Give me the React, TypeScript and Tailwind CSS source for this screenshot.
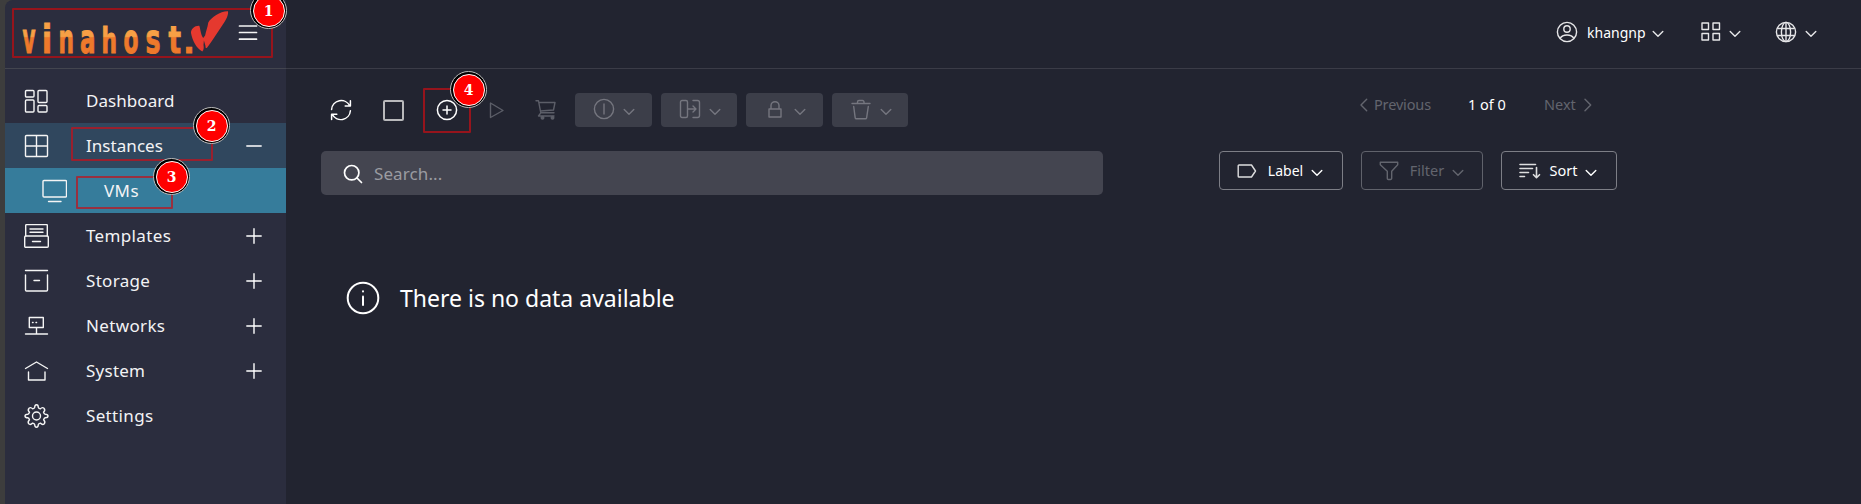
import React, { type ReactNode } from "react";

type IconProps = { w?: number; h?: number; sw?: number; className?: string; children: ReactNode };

function Icon({ w = 24, h = 24, sw = 1.4, className = "", children }: IconProps) {
  return (
    <svg
      width={w}
      height={h}
      viewBox={`0 0 ${w} ${h}`}
      fill="none"
      stroke="currentColor"
      strokeWidth={sw}
      strokeLinecap="round"
      strokeLinejoin="round"
      className={`block shrink-0 ${className}`}
    >
      {children}
    </svg>
  );
}

const Chevron = ({ className = "" }: { className?: string }) => (
  <Icon w={12} h={8} className={className}>
    <path d="M1.2 1.5 6 6.3l4.8-4.8" />
  </Icon>
);

const logoLetters = [
  { ch: "v", x: 22.5, sx: 0.475, size: 42 },
  { ch: "i", x: 42, sx: 0.747, size: 39 },
  { ch: "n", x: 58.5, sx: 0.531, size: 41 },
  { ch: "a", x: 80, sx: 0.56, size: 41 },
  { ch: "h", x: 101.5, sx: 0.605, size: 36 },
  { ch: "o", x: 123.5, sx: 0.532, size: 41 },
  { ch: "s", x: 145.5, sx: 0.615, size: 41 },
  { ch: "t", x: 168.5, sx: 0.688, size: 38 },
  { ch: ".", x: 183.5, sx: 0.965, size: 30 },
];

function Logo() {
  return (
    <svg width="233" height="68" viewBox="5 0 233 68" className="block shrink-0">
      <defs>
        <linearGradient id="logo" gradientUnits="userSpaceOnUse" x1="0" y1="-31" x2="0" y2="1">
          <stop offset="0.46" stopColor="#f7a045" />
          <stop offset="0.5" stopColor="#ee792b" />
        </linearGradient>
      </defs>
      {logoLetters.map((l) => (
        <text
          key={l.x}
          transform={`translate(${l.x} 52.7) scale(${l.sx} 1)`}
          fontSize={l.size}
          fontWeight="700"
          fill="url(#logo)"
          stroke="url(#logo)"
          strokeWidth="1"
          className="font-['DejaVu_Sans',sans-serif]"
        >
          {l.ch}
        </text>
      ))}
      <path
        fill="#e5392f"
        d="M228 11.2c.5 4-1.700 8-5 13-4.500 7-10.500 16-16 23.600-1.200.8-1.600-.3-1.500-1.800l-1.600-5.600-.4 4.600c.5 2.500.3 5.200-1.200 6.600-6-3.500-10-11-11.300-18.600-.3-4 4-7.600 8.300-7.200 1.200 3 1.200 8.500 3.900 12.200l1.900-2.600c.7-3.500 2.400-8 3.200-13C211 17.500 221 10.800 228 11.200z"
      />
    </svg>
  );
}

const Plus = (
  <Icon w={16} h={16} className="text-white">
    <path d="M8 .8v14.400M.8 8h14.400" />
  </Icon>
);
const Minus = (
  <Icon w={16} h={16} className="text-white">
    <path d="M.8 8h14.400" />
  </Icon>
);

const navItems: { label: string; cls: string; row: string; icon: ReactNode; end?: ReactNode }[] = [
  {
    label: "Dashboard",
    cls: "tracking-[0.05px]",
    row: "",
    icon: (
      <>
        <rect x="1.500" y="1.500" width="8.500" height="6.500" rx="1" />
        <rect x="1.500" y="11" width="8.500" height="12" rx="1" />
        <rect x="14" y="1.500" width="9" height="12" rx="1" />
        <rect x="14" y="16.500" width="9" height="6.500" rx="1" />
      </>
    ),
  },
  {
    label: "Instances",
    cls: "tracking-[0.05px]",
    row: "bg-[#30475e]",
    icon: <path d="M2.500 1.500h20a1 1 0 0 1 1 1v19a1 1 0 0 1-1 1h-20a1 1 0 0 1-1-1v-19a1 1 0 0 1 1-1zM12.500 1.500v21M1.500 12h22" />,
    end: Minus,
  },
  {
    label: "VMs",
    cls: "tracking-[0.4px]",
    row: "bg-[#367c9b]",
    icon: (
      <>
        <rect x="1" y="1.500" width="23.500" height="16.500" rx="1" />
        <path d="M6.500 22.500h12.500" />
      </>
    ),
  },
  {
    label: "Templates",
    cls: "tracking-[0.35px]",
    row: "",
    icon: (
      <>
        <path d="M1.700 12V1.500a1 1 0 0 1 1-1h19.600a1 1 0 0 1 1 1V12" />
        <path d="M6 5h13M6 8.300h13M8.500 17.500h8" />
        <rect x=".7" y="12" width="23.600" height="11.300" rx="1" />
      </>
    ),
    end: Plus,
  },
  {
    label: "Storage",
    cls: "tracking-[0.3px]",
    row: "",
    icon: <path d="M1.500 1.500h22M1.500 6v15a1 1 0 0 0 1 1h20a1 1 0 0 0 1-1V6M10 11.500h5.500" />,
    end: Plus,
  },
  {
    label: "Networks",
    cls: "tracking-[0.35px]",
    row: "",
    icon: (
      <>
        <path d="M5.300 3.500h14v10h-14zM12.500 13.500v6.500M1.500 20h22" />
        <path d="M8.500 8.500h.6M12 8.500h.6" />
      </>
    ),
    end: Plus,
  },
  {
    label: "System",
    cls: "tracking-[0.25px]",
    row: "",
    icon: <path d="M1.500 9.500 12.500 3l11 6.500M4.500 13v8h16.500v-8" />,
    end: Plus,
  },
  {
    label: "Settings",
    cls: "tracking-[0.35px]",
    row: "",
    icon: (
      <>
        <circle cx="12.500" cy="12" r="4" />
        <path d="M10.700 3.400Q10.700.7 12.500.7T14.300 3.400Q14.500 4.300 16.300 4.900Q18.200 2.800 20 4.200Q21.700 6 19.500 8.200Q19.900 9.900 21.200 10.200Q24 10.200 24 12T21.200 13.800Q20.200 14 19.600 15.800Q21.700 18 20.300 19.800Q18.500 21.400 16.300 19.100Q14.600 19.500 14.300 20.600Q14.300 23.300 12.500 23.300T10.700 20.600Q10.500 19.700 8.700 19.100Q6.500 21.300 4.700 19.800Q3.300 18 5.500 15.800Q5 14 3.800 13.800Q1 13.800 1 12T3.800 10.200Q4.900 10 5.500 8.200Q3.300 6 5 4.200Q6.800 2.800 8.700 4.900Q10.400 4.500 10.700 3.400Z" />
      </>
    ),
  },
];

function Sidebar() {
  return (
    <aside className="flex w-[281px] shrink-0 flex-col rounded-tl-lg bg-[#2b2d3e]">
      <div className="flex h-[69px] shrink-0 items-center border-b border-[#43454f]">
        <Logo />
        <Icon w={20} h={18} sw={1.700} className="-mt-[3px] text-[#f5f5f5]">
          <path d="M1.500 2h17M1.500 8.500h17M1.500 15.200h17" />
        </Icon>
      </div>
      <nav className="mt-[9px] flex flex-col">
        {navItems.map((n) => (
          <div
            key={n.label}
            className={`flex h-[45px] items-center pr-[24px] ${n.label === "VMs" ? "pl-[37px]" : "pl-[19px]"} ${n.row}`}
          >
            <Icon w={25} h={24} className="text-[#f5f5f5]">
              {n.icon}
            </Icon>
            <span className={`ml-[37px] text-[17px] leading-6 whitespace-nowrap text-[#f3f3f5] ${n.cls}`}>{n.label}</span>
            <span className="ml-auto">{n.end}</span>
          </div>
        ))}
      </nav>
    </aside>
  );
}

function Header() {
  return (
    <header className="flex h-[69px] shrink-0 items-center justify-end border-b border-[#3b3c47] pr-[44px] pb-[4px] text-[#e6e6e8]">
      <Icon w={22} h={22}>
        <circle cx="11" cy="11" r="9.600" />
        <circle cx="11" cy="8" r="3.200" />
        <path d="M4.300 17.300c1.200-2.600 3.600-3.300 6.700-3.300s5.500.7 6.700 3.300" />
      </Icon>
      <span className="ml-[9px] w-[59px] text-[14px] whitespace-nowrap text-white">khangnp</span>
      <Chevron className="mt-[4px] ml-[6px]" />
      <Icon w={22} h={22} className="ml-[36px]">
        <path d="M2 2h6.500v6.500H2zM13 2h6.500v6.500H13zM2 12.500h6.500V19H2zM13 12.500h6.500V19H13z" />
      </Icon>
      <Chevron className="mt-[4px] ml-[7px]" />
      <Icon w={22} h={22} className="ml-[34px]">
        <circle cx="11" cy="11" r="9.600" />
        <ellipse cx="11" cy="11" rx="4.600" ry="9.600" />
        <path d="M11 1.400v19.200M2.800 7.500h16.400M2.800 14.500h16.400" />
      </Icon>
      <Chevron className="mt-[4px] ml-[8px]" />
    </header>
  );
}

const actions: { key: string; w: string; icon: ReactNode }[] = [
  {
    key: "power",
    w: "w-[77px]",
    icon: (
      <>
        <circle cx="11" cy="11" r="9.600" />
        <path d="M11 6v10" />
      </>
    ),
  },
  {
    key: "migrate",
    w: "w-[76px]",
    icon: (
      <path d="M3 2.500h4a1.500 1.500 0 0 1 1.500 1.500v14A1.500 1.500 0 0 1 7 19.500H3A1.500 1.500 0 0 1 1.500 18V4A1.500 1.500 0 0 1 3 2.500zM14 2.500h4.500a2 2 0 0 1 2 2v13a2 2 0 0 1-2 2H14M8.500 11H17M14 8l3 3-3 3" />
    ),
  },
  {
    key: "lock",
    w: "w-[77px]",
    icon: <path d="M5 11h12v8H5zM7 11V7.500a4 3.700 0 0 1 8 0V11" />,
  },
  {
    key: "delete",
    w: "w-[76px]",
    icon: <path d="M2 5.500h18M7.500 5.500V4A1.500 1.500 0 0 1 9 2.500h3.500A1.500 1.500 0 0 1 14 4v1.500M3.700 8.500l1.500 11.300a1.200 1.200 0 0 0 1.200 1h9a1.200 1.200 0 0 0 1.200-1L18.300 8.500" />,
  },
];

function Toolbar() {
  return (
    <div className="flex h-[34px] w-[1275px] items-center">
      <Icon w={24} h={24} sw={1.500} className="ml-[8px] mb-px text-white">
        <path d="M2.600 11.500a9.600 9.600 0 0 1 18.200-3.500M21.400 12.700a9.600 9.600 0 0 1-18.200 3.500M21.400 2.800V8h-5.200M2.600 21.400v-5.200h5.200" />
      </Icon>
      <div className="ml-[30px] h-[21px] w-[21px] rounded-[2px] border-2 border-[#b9b9bb]" />
      <Icon w={22} h={22} sw={1.500} className="ml-[32px] text-white">
        <circle cx="11" cy="11" r="9.600" />
        <path d="M11 7v8M7 11h8" />
      </Icon>
      <Icon w={16} h={18} className="ml-[31px] text-[#5c5e68]">
        <path d="M1.500 2v14.500l12.500-7z" />
      </Icon>
      <Icon w={22} h={22} className="ml-[30px] text-[#5c5e68]">
        <path d="M1 1.800h2.500l2.300 12H19M4 3.500h16L18.500 11l-13 1M5.800 13.800 3.500 17H19" />
        <circle cx="7.500" cy="18.800" r="1.300" fill="currentColor" />
        <circle cx="17.500" cy="18.800" r="1.300" fill="currentColor" />
      </Icon>
      <div className="ml-[18px] flex gap-[9px]">
        {actions.map((a) => (
          <button key={a.key} className={`flex h-[34px] items-center justify-start rounded-[4px] bg-[#3c3e49] pl-[18px] text-[#75767f] ${a.w}`}>
            <Icon w={22} h={22} className="-mt-[2px]">
              {a.icon}
            </Icon>
            <Chevron className="mt-[4px] ml-[8px]" />
          </button>
        ))}
      </div>
      <div className="mr-[3px] ml-auto flex items-center pb-[10px] text-[14.500px] whitespace-nowrap text-[#63656e]">
        <Icon w={10} h={14}>
          <path d="M7.700 1.200 2 7l5.700 5.800" />
        </Icon>
        <span className="ml-[5px] w-[58px] tracking-[-0.15px]">Previous</span>
        <span className="ml-[36px] w-[40px] text-white">1 of 0</span>
        <span className="ml-[36px] w-[33px]">Next</span>
        <Icon w={10} h={14} className="ml-[6px]">
          <path d="M2 1.200 7.700 7 2 12.800" />
        </Icon>
      </div>
    </div>
  );
}

function SearchRow() {
  return (
    <div className="mt-[24px] flex h-[44px] items-start">
      <div className="flex h-[44px] w-[782px] shrink-0 items-center rounded-[5px] bg-[#444550] pl-[22px]">
        <Icon w={20} h={20} sw={1.700} className="mt-px text-white">
          <circle cx="8.700" cy="8.700" r="7.200" />
          <path d="m14 14 4.500 4.500" />
        </Icon>
        <span className="ml-[11px] pt-px text-[17px] leading-6 tracking-[0.1px] text-[#9a9ba1]">Search...</span>
      </div>
      <button className="ml-[116px] flex h-[39px] w-[124px] shrink-0 items-center rounded-[4px] border border-[#7d7e86] pl-[17px] text-[14px] text-white">
        <Icon w={20} h={16} className="text-[#dededf]">
          <path d="M2 2h12.500l4 6-4 6H2a.8.800 0 0 1-.8-.8V2.800A.8.800 0 0 1 2 2z" />
        </Icon>
        <span className="ml-[10px] w-[37px]">Label</span>
        <Chevron className="mt-[5px] ml-[7px]" />
      </button>
      <button className="ml-[18px] flex h-[39px] w-[122px] shrink-0 items-center rounded-[4px] border border-[#60626b] pl-[17px] text-[14.500px] text-[#63656e]">
        <Icon w={20} h={20}>
          <path d="M1.300 1.300h17.400v2.500l-6 6.500V17a1.300 1.300 0 0 1-1.300 1.500H9.300A1 1 0 0 1 8.300 17.500v-7.200l-7-6.500z" />
        </Icon>
        <span className="ml-[10px] w-[36px]">Filter</span>
        <Chevron className="mt-[5px] ml-[7px]" />
      </button>
      <button className="ml-[18px] flex h-[39px] w-[116px] shrink-0 items-center rounded-[4px] border border-[#7d7e86] pl-[17px] text-[14.500px] text-white">
        <Icon w={22} h={18} sw={1.600} className="text-[#dededf]">
          <path d="M1 2.500h15.500M1 6.500h12.500M1 10.500h8.500M1 14.500h4.500M17.500 5.500V15.500M14.500 12.700l3 3 3-3" />
        </Icon>
        <span className="ml-[8px] w-[29px]">Sort</span>
        <Chevron className="mt-[5px] ml-[7px]" />
      </button>
    </div>
  );
}

function Marker({ n, className }: { n: number; className: string }) {
  return (
    <div className={`absolute flex h-[37px] w-[37px] items-center justify-center rounded-full border border-[#bdbdbd] bg-black p-[1.500px] ${className}`}>
      <div className="flex h-full w-full items-center justify-center rounded-full border border-white bg-[#ff0000] pt-px font-['DejaVu_Serif_Condensed','DejaVu_Serif',serif] text-[15.500px] font-bold text-white">
        {n}
      </div>
    </div>
  );
}

function Annotations() {
  return (
    <div className="pointer-events-none absolute inset-0 overflow-hidden">
      <div className="absolute top-[8px] left-[12px] h-[50px] w-[261px] rounded-[1px] border-2 border-[#96141c]" />
      <div className="absolute top-[127px] left-[71px] h-[34px] w-[142px] rounded-[1px] border-2 border-[#99202e]" />
      <div className="absolute top-[176px] left-[76px] h-[33px] w-[97px] rounded-[1px] border-2 border-[#99303f]" />
      <div className="absolute top-[88px] left-[423px] h-[45px] w-[48px] rounded-[1px] border-2 border-[#96141c]" />
      <Marker n={1} className="-top-[8px] left-[250px]" />
      <Marker n={2} className="top-[107px] left-[193px]" />
      <Marker n={3} className="top-[158px] left-[153px]" />
      <Marker n={4} className="top-[71px] left-[450px]" />
    </div>
  );
}

export default function App() {
  return (
    <div className="relative flex h-[504px] w-[1861px] overflow-hidden bg-[#3d3d3d] pl-[5px] font-['Noto_Sans',sans-serif]">
      <Sidebar />
      <div className="flex min-w-0 flex-1 flex-col bg-[#222430]">
        <Header />
        <main className="mt-[24px] pl-[35px]">
          <Toolbar />
          <SearchRow />
          <div className="mt-[86px] ml-[25px] flex h-[34px] items-center text-white">
            <Icon w={34} h={34} sw={2}>
              <circle cx="17" cy="17" r="15.300" />
              <path d="M17 15.500v8.500" />
              <path d="M17 10.300v.1" />
            </Icon>
            <span className="ml-[20px] text-[23px] whitespace-nowrap">There is no data available</span>
          </div>
        </main>
      </div>
      <Annotations />
    </div>
  );
}
